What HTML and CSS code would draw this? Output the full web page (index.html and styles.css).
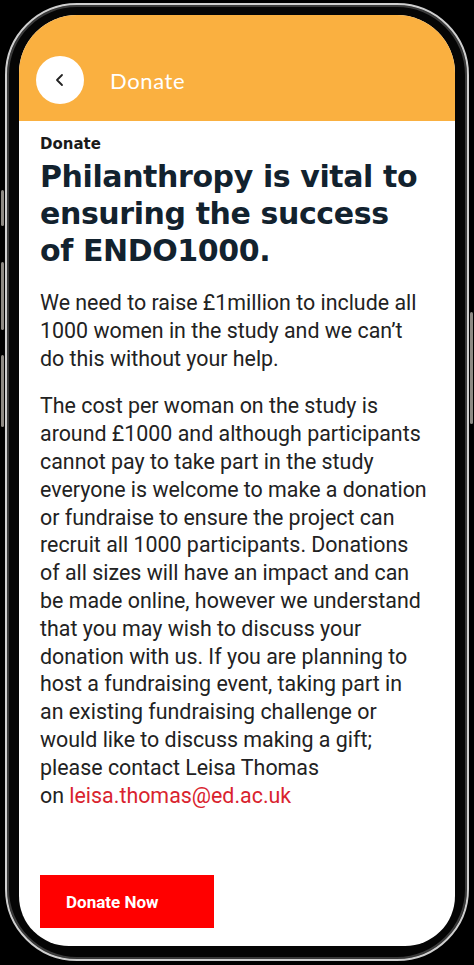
FILE: index.html
```html
<!DOCTYPE html>
<html lang="en">
<head>
<meta charset="utf-8">
<title>Donate</title>
<link rel="stylesheet" href="styles.css">
</head>
<body>
<div class="device">
  <span class="side-btn side-btn-a"></span>
  <span class="side-btn side-btn-b"></span>
  <span class="side-btn side-btn-c"></span>
  <span class="side-btn side-btn-r"></span>
  <div class="phone">
    <div class="screen">
      <header class="topbar">
        <button class="back" aria-label="Back">
          <svg width="14" height="14" viewBox="0 0 14 14"><path d="M9 2 L4 7 L9 12" fill="none" stroke="#222" stroke-width="1.8" stroke-linecap="round" stroke-linejoin="round"/></svg>
        </button>
        <span class="topbar-title">Donate</span>
      </header>
      <main class="content">
        <div class="label">Donate</div>
        <h1 class="headline">Philanthropy is vital to ensuring the success of ENDO1000.</h1>
        <p class="para">We need to raise £1million to include all 1000 women in the study and we can’t do this without your help.</p>
        <p class="para">The cost per woman on the study is around £1000 and although participants cannot pay to take part in the study everyone is welcome to make a donation or fundraise to ensure the project can recruit all 1000 participants. Donations of all sizes will have an impact and can be made online, however we understand that you may wish to discuss your donation with us. If you are planning to host a fundraising event, taking part in an existing fundraising challenge or would like to discuss making a gift; please contact Leisa Thomas on&nbsp;<a class="mail" href="#">leisa.thomas@ed.ac.uk</a></p>
        <div class="actions">
          <button class="donate-btn">Donate Now</button>
        </div>
      </main>
    </div>
  </div>
</div>
</body>
</html>
```
FILE: styles.css
```css
* { box-sizing: border-box; }
html, body {
  margin: 0;
  padding: 0;
  background: #000;
}
body {
  width: 474px;
  height: 965px;
  overflow: hidden;
}
.device {
  position: relative;
  width: 474px;
  height: 965px;
  padding: 3px 5px 4px 5px;
}
.phone {
  width: 464px;
  height: 958px;
  border: 2px solid #cfcfcf;
  border-radius: 72px;
  background: #050505;
  padding: 10px 12px 13px 12px;
  box-shadow: inset 0 0 0 2px #3a3a3a;
}
.screen {
  width: 436px;
  height: 931px;
  border-radius: 58px 58px 50px 50px;
  background: #fff;
  overflow: hidden;
  display: flex;
  flex-direction: column;
}
.side-btn {
  position: absolute;
  width: 3px;
  background: #8e8a84;
  border-radius: 2px;
}
.side-btn-a { left: 1px; top: 190px; height: 36px; }
.side-btn-b { left: 1px; top: 262px; height: 68px; }
.side-btn-c { left: 1px; top: 355px; height: 72px; }
.side-btn-r { right: 1px; top: 312px; height: 112px; }

.topbar {
  height: 106px;
  flex: none;
  background: #fab040;
  display: flex;
  align-items: center;
  padding: 24px 0 0 17px;
  gap: 26px;
}
.back {
  width: 48px;
  height: 48px;
  border-radius: 50%;
  border: none;
  background: #fff;
  display: flex;
  align-items: center;
  justify-content: center;
  padding: 0;
}
.topbar-title {
  font-family: Lato, "Noto Sans", sans-serif;
  font-weight: 400;
  font-size: 22px;
  color: #fff;
  letter-spacing: 0.6px;
}
.content {
  flex: 1;
  padding: 14px 25px 0 21px;
  display: flex;
  flex-direction: column;
}
.label {
  font-family: "DejaVu Sans", sans-serif;
  font-weight: 700;
  font-size: 15px;
  color: #1a1a1a;
  line-height: 18px;
}
.headline {
  margin: 5px 0 0 0;
  max-width: 384px;
  font-family: "DejaVu Sans", sans-serif;
  font-weight: 700;
  font-size: 30px;
  line-height: 37px;
  color: #12222e;
  letter-spacing: -0.4px;
}
.para {
  margin: 20px 0 0 0;
  font-family: Roboto, "Liberation Sans", sans-serif;
  font-size: 21.4px;
  line-height: 27.8px;
  color: #222;
}
.para + .para { margin-top: 20px; }
.mail {
  color: #d9232e;
  text-decoration: none;
}
.actions {
  margin-top: 66px;
}
.donate-btn {
  width: 174px;
  height: 53px;
  border: none;
  background: #ff0000;
  color: #fff;
  font-family: Roboto, "Liberation Sans", sans-serif;
  font-weight: 700;
  font-size: 17px;
  text-align: left;
  padding: 0 0 0 26px;
}
```
